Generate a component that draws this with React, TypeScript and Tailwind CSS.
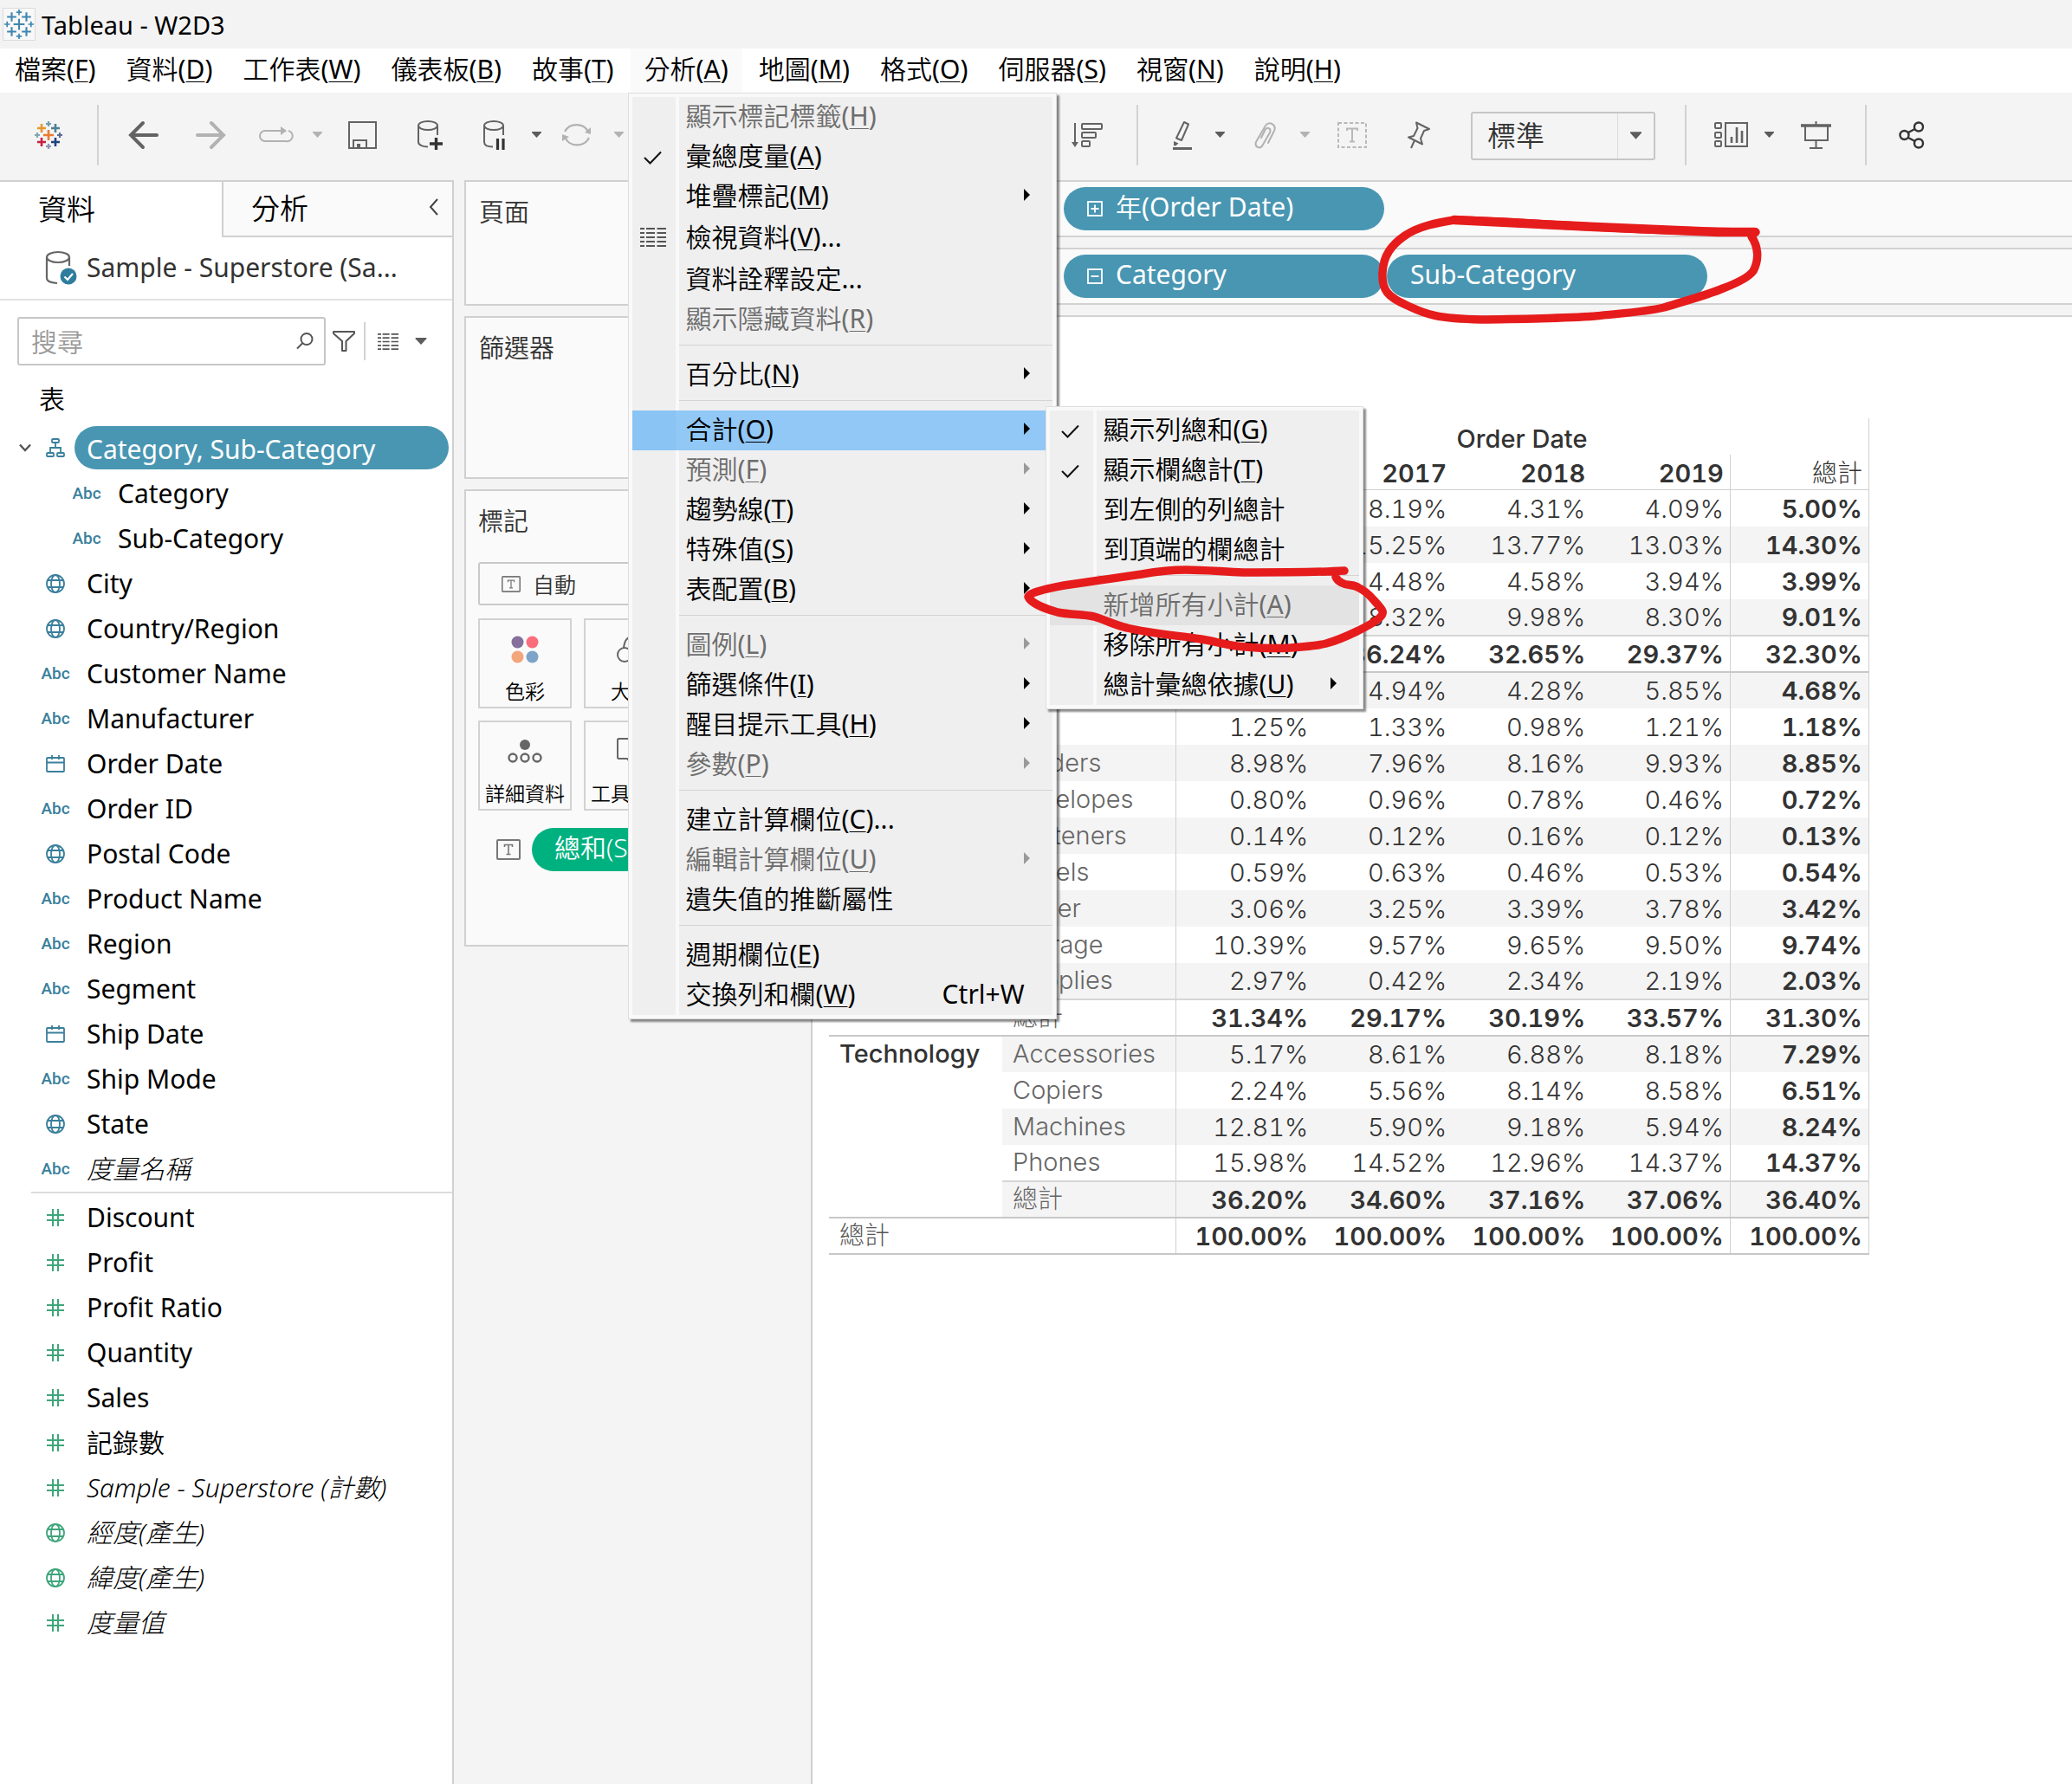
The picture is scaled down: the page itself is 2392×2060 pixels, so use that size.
import React from "react";

const TEAL = "#3a7f9c";
const GREEN = "#3fa57b";

/* ---------- Shared pieces ---------- */

function Plus({ x, y, r, w, c }: { x: number; y: number; r: number; w: number; c: string }) {
  return <path d={`M${x - r} ${y}H${x + r}M${x} ${y - r}V${y + r}`} stroke={c} strokeWidth={w} fill="none" />;
}

function TableauMark({ size, mono }: { size: number; mono?: boolean }) {
  const c = (s: string) => (mono ? "#3f86b0" : s);
  const w = mono ? 2 : 2.6;
  return (
    <svg width={size} height={size} viewBox="0 0 32 32" aria-hidden="true">
      <Plus x={16} y={16} r={6} w={w} c={c("#eb7b30")} />
      <Plus x={8} y={8} r={5} w={w} c={c("#e8962e")} />
      <Plus x={24} y={8} r={5} w={w} c={c("#4e7f93")} />
      <Plus x={8} y={24} r={5} w={w} c={c("#c8203f")} />
      <Plus x={24} y={24} r={5} w={w} c={c("#1f447e")} />
      <Plus x={16} y={3} r={3} w={w - 0.4} c={c("#6f9fb0")} />
      <Plus x={16} y={29} r={3} w={w - 0.4} c={c("#8a93b8")} />
      <Plus x={3} y={16} r={3} w={w - 0.4} c={c("#7fa7b5")} />
      <Plus x={29} y={16} r={3} w={w - 0.4} c={c("#5a6b9b")} />
    </svg>
  );
}

function Caret({ color = "#5c5c5c", w = 11, h = 7 }: { color?: string; w?: number; h?: number }) {
  return (
    <svg width={w} height={h} viewBox="0 0 11 7" aria-hidden="true" className="shrink-0">
      <path d="M0 0H11V1L5.5 7L0 1Z" fill={color} />
    </svg>
  );
}

function GridIcon({ w, h }: { w: number; h: number }) {
  return (
    <svg width={w} height={h} viewBox="0 0 30 22" preserveAspectRatio="none" aria-hidden="true">
      {[1, 6, 11, 16, 21].map((y) => (
        <path key={y} d={`M0 ${y}H5M7 ${y}H17M19.5 ${y}H30`} stroke="#555" strokeWidth="2" />
      ))}
    </svg>
  );
}

function TextBoxIcon({ w, h }: { w: number; h: number }) {
  return (
    <svg width={w} height={h} viewBox="0 0 28 24" aria-hidden="true" className="shrink-0">
      <rect x="1" y="1" width="26" height="22" rx="1" fill="none" stroke="#777" strokeWidth="2" />
      <path d="M9.5 9V6.5H18.500V9M14 6.500V17.500M11.500 17.500H16.500" fill="none" stroke="#777" strokeWidth="1.600" />
    </svg>
  );
}

/* ---------- Menus ---------- */

function Accel({ t, k, tail }: { t: string; k?: string; tail?: string }) {
  return (
    <span className="whitespace-nowrap">
      <span className="font-[350]">{t}</span>
      {k && (
        <>
          (<span className="underline decoration-1 underline-offset-[3px]">{k}</span>)
        </>
      )}
      {tail}
    </span>
  );
}

type Item = {
  t: string;
  k?: string;
  tail?: string;
  off?: boolean;
  sub?: boolean;
  check?: boolean;
  grid?: boolean;
  keys?: string;
  open?: boolean;
  hover?: boolean;
};

const analysisMenu: (Item | null)[] = [
  { t: "顯示標記標籤", k: "H", off: true },
  { t: "彙總度量", k: "A", check: true },
  { t: "堆疊標記", k: "M", sub: true },
  { t: "檢視資料", k: "V", tail: "...", grid: true },
  { t: "資料詮釋設定", tail: "..." },
  { t: "顯示隱藏資料", k: "R", off: true },
  null,
  { t: "百分比", k: "N", sub: true },
  null,
  { t: "合計", k: "O", sub: true, open: true },
  { t: "預測", k: "F", sub: true, off: true },
  { t: "趨勢線", k: "T", sub: true },
  { t: "特殊值", k: "S", sub: true },
  { t: "表配置", k: "B", sub: true },
  null,
  { t: "圖例", k: "L", sub: true, off: true },
  { t: "篩選條件", k: "I", sub: true },
  { t: "醒目提示工具", k: "H", sub: true },
  { t: "參數", k: "P", sub: true, off: true },
  null,
  { t: "建立計算欄位", k: "C", tail: "..." },
  { t: "編輯計算欄位", k: "U", sub: true, off: true },
  { t: "遺失值的推斷屬性" },
  null,
  { t: "週期欄位", k: "E" },
  { t: "交換列和欄", k: "W", keys: "Ctrl+W" },
];

const totalsMenu: (Item | null)[] = [
  { t: "顯示列總和", k: "G", check: true },
  { t: "顯示欄總計", k: "T", check: true },
  { t: "到左側的列總計" },
  { t: "到頂端的欄總計" },
  null,
  { t: "新增所有小計", k: "A", off: true, hover: true },
  { t: "移除所有小計", k: "M" },
  { t: "總計彙總依據", k: "U", sub: true },
];

function MenuPanel({ items, className }: { items: (Item | null)[]; className: string }) {
  return (
    <div
      role="menu"
      className={
        "absolute z-20 border border-[#dedede] bg-[#f9f9f9] p-1 shadow-[3px_3px_2px_rgba(0,0,0,0.45)] " + className
      }
    >
      <div className="bg-[linear-gradient(to_right,#efefef_50px,#f9f9f9_50px,#f9f9f9_54px,#efefef_54px)]">
        {items.map((it, i) =>
          it === null ? (
            <div key={i} role="separator" className="ml-[54px] flex h-[18px] flex-col pt-1.5">
              <div className="h-px bg-[#d4d4d4]" />
            </div>
          ) : (
            <div
              key={i}
              className={
                "relative " +
                (it.open
                  ? "bg-[linear-gradient(to_right,#8ac4f4_50px,#91c8f6_50px)]"
                  : it.hover
                    ? "bg-[#e3e3e3]"
                    : "")
              }
            >
              <button
                type="button"
                role="menuitem"
                disabled={it.off}
                className={
                  "flex w-full items-center pb-0.5 text-left " +
                  (it.grid ? "h-[50px] " : "h-[46px] ") +
                  (it.off ? "text-[#6d6d6d]" : "text-black")
                }
              >
                <span className="flex w-[62px] shrink-0 items-center pl-[9px]">
                  {it.check && (
                    <svg width="30" height="22" viewBox="0 0 30 22" aria-hidden="true" className="mt-1">
                      <path d="M5 11L11.500 17.500L24 4.500" fill="none" stroke="#111" strokeWidth="2" />
                    </svg>
                  )}
                  {it.grid && <GridIcon w={30} h={22} />}
                </span>
                <Accel t={it.t} k={it.k} tail={it.tail} />
                {it.keys && <span className="mr-[32px] ml-auto">{it.keys}</span>}
                {it.sub && (
                  <svg width="7" height="14" viewBox="0 0 7 14" aria-hidden="true" className="mr-[26px] mb-0.5 ml-auto">
                    <path d="M0 0L7 7L0 14Z" fill={it.off ? "#9a9a9a" : "#000"} />
                  </svg>
                )}
              </button>
              {it.open && <MenuPanel items={totalsMenu} className="top-[-5px] left-[477px] w-[367px]" />}
            </div>
          ),
        )}
      </div>
    </div>
  );
}

const menuBar: [string, string][] = [
  ["檔案", "F"],
  ["資料", "D"],
  ["工作表", "W"],
  ["儀表板", "B"],
  ["故事", "T"],
  ["分析", "A"],
  ["地圖", "M"],
  ["格式", "O"],
  ["伺服器", "S"],
  ["視窗", "N"],
  ["說明", "H"],
];

/* ---------- Toolbar ---------- */

function Tool({ label, className, children }: { label: string; className: string; children: React.ReactNode }) {
  return (
    <button type="button" aria-label={label} className={"flex shrink-0 items-center justify-center " + className}>
      {children}
    </button>
  );
}

function Sep({ className }: { className: string }) {
  return <div className={"h-[70px] w-0.5 shrink-0 bg-[#d2d2d2] " + className} />;
}

function Toolbar() {
  const g = "#636363";
  const l = "#b2b2b2";
  return (
    <div role="toolbar" className="flex h-[101px] items-center bg-[#f4f4f4] pb-1 pl-10">
      <Tool label="Tableau" className="w-8">
        <TableauMark size={32} />
      </Tool>
      <Sep className="ml-10" />
      <Tool label="復原" className="ml-[34px] w-9">
        <svg width="36" height="34" viewBox="0 0 36 34" fill="none" stroke={g} strokeWidth="4" strokeLinecap="round">
          <path d="M17 3L3 17L17 31M3 17H33" />
        </svg>
      </Tool>
      <Tool label="重做" className="ml-[41px] w-9">
        <svg width="36" height="34" viewBox="0 0 36 34" fill="none" stroke={l} strokeWidth="4" strokeLinecap="round">
          <path d="M19 3L33 17L19 31M33 17H3" />
        </svg>
      </Tool>
      <Tool label="重播" className="ml-[36px] w-[42px]">
        <svg width="42" height="22" viewBox="0 0 42 22" fill="none" stroke={l} strokeWidth="2">
          <path d="M28 6H9A6 6 0 0 0 9 18H33A6 6 0 0 0 36 6" />
          <path d="M27 1L34 6L27 11Z" fill={l} stroke="none" />
        </svg>
      </Tool>
      <Tool label="重播選項" className="ml-[22px] w-[11px]">
        <Caret color={l} />
      </Tool>
      <Tool label="儲存" className="ml-[30px] w-[33px]">
        <svg width="33" height="32" viewBox="0 0 33 32" fill="none" stroke={g} strokeWidth="2">
          <rect x="1" y="1" width="31" height="30" />
          <path d="M6 31V22H21V31" />
          <path d="M12 26V31" strokeWidth="4" />
        </svg>
      </Tool>
      <Tool label="新增資料來源" className="ml-[47px] w-[30px]">
        <svg width="30" height="34" viewBox="0 0 30 34" fill="none" stroke={g} strokeWidth="2">
          <ellipse cx="12" cy="6" rx="11" ry="5" />
          <path d="M1 6V25C1 28 5 30.500 12 30.500M23 6V17" />
          <path d="M14 27H29M21.500 20V34" stroke="#333" strokeWidth="3.400" />
        </svg>
      </Tool>
      <Tool label="暫停自動更新" className="ml-[46px] w-[26px]">
        <svg width="26" height="34" viewBox="0 0 26 34" fill="none" stroke={g} strokeWidth="2">
          <ellipse cx="12" cy="6" rx="11" ry="5" />
          <path d="M1 6V25C1 28 4 30.500 11 30.500M23 6V17" />
          <path d="M16.500 21V34M23 21V34" stroke="#333" strokeWidth="3.200" />
        </svg>
      </Tool>
      <Tool label="暫停選項" className="ml-[30px] w-[11px]">
        <Caret />
      </Tool>
      <Tool label="重新整理" className="ml-[23px] w-9">
        <svg width="36" height="32" viewBox="0 0 36 32" fill="none" stroke={l} strokeWidth="2.200">
          <path d="M4 12A15 14 0 0 1 31 12M32 19A15 14 0 0 1 5 20" />
          <path d="M27 13L34 15L34 7ZM9 18L1 23V15Z" fill={l} stroke="none" />
        </svg>
      </Tool>
      <Tool label="重新整理選項" className="ml-[25px] w-[11px]">
        <Caret color={l} />
      </Tool>
      <Tool label="遞減排序" className="ml-[517px] w-9">
        <svg width="36" height="32" viewBox="0 0 36 32" fill="none" stroke={g} strokeWidth="2">
          <path d="M4 2V27" />
          <path d="M0 24H8L4 30Z" fill={g} stroke="none" />
          <rect x="12" y="3" width="23" height="6" rx="1" />
          <rect x="12" y="13" width="16" height="6" rx="1" />
          <rect x="12" y="23" width="9" height="6" rx="1" />
        </svg>
      </Tool>
      <Sep className="ml-[39px]" />
      <Tool label="醒目提示" className="ml-[40px] w-6">
        <svg width="24" height="34" viewBox="0 0 24 34" fill="none" stroke={g} strokeWidth="2" strokeLinejoin="round">
          <path d="M13 2L18 4.500L10 23L4 20.500Z" />
          <path d="M1 24L6.500 26.500L3 29.500L1 29Z" fill={g} stroke="none" />
          <path d="M0 32.500H22" strokeWidth="3" />
        </svg>
      </Tool>
      <Tool label="醒目提示選項" className="ml-[25px] w-[11px]">
        <Caret />
      </Tool>
      <Tool label="群組" className="ml-[34px] w-[26px]">
        <svg width="26" height="32" viewBox="0 0 26 32" fill="none" stroke={l} strokeWidth="2" strokeLinecap="round">
          <path d="M16 25L23 11C26 4 17 -1 13 5L2 24C0 30 7 33 10 27L18 13C20 8 15 6 12.500 10L8 19" />
        </svg>
      </Tool>
      <Tool label="群組選項" className="ml-[27px] w-[11px]">
        <Caret color={l} />
      </Tool>
      <Tool label="顯示標記標籤" className="ml-[32px] w-[34px]">
        <svg width="34" height="30" viewBox="0 0 34 30" fill="none" stroke="#b8b8b8" strokeWidth="2">
          <rect x="1" y="1" width="32" height="28" strokeDasharray="4 2.500" />
          <path d="M11 10V7.500H23V10M17 7.500V22.500M14 22.500H20" />
        </svg>
      </Tool>
      <Tool label="固定座標軸" className="ml-[46px] w-7">
        <svg width="28" height="32" viewBox="0 0 28 32" fill="none" stroke={g} strokeWidth="2" strokeLinejoin="round">
          <path d="M11 1.500L26 9L20 11L16 20L18 26.500L2 18.500L8 17L12.500 8ZM9 22L5 31" />
        </svg>
      </Tool>
      <div className="relative mt-0.5 ml-[46px] h-14 w-[213px] shrink-0">
        <select
          aria-label="符合"
          defaultValue="標準"
          className="h-14 w-full appearance-none rounded-[3px] border-2 border-[#c6c6c6] bg-[#f4f4f4] pl-[17px] text-[33px] font-[350] text-[#333]"
        >
          <option>標準</option>
        </select>
        <div className="pointer-events-none absolute inset-y-0.5 right-0.5 flex w-[42px] items-center justify-center border-l border-[#dcdcdc]">
          <Caret w={13} h={9} />
        </div>
      </div>
      <Sep className="ml-[34px]" />
      <Tool label="顯示卡片" className="ml-[32px] w-10">
        <svg width="40" height="30" viewBox="0 0 40 30" fill="none" stroke={g} strokeWidth="2">
          <rect x="1" y="1" width="7" height="6" rx="1" />
          <rect x="1" y="12" width="7" height="6" rx="1" />
          <rect x="1" y="22" width="7" height="6" rx="1" />
          <rect x="13" y="1" width="25" height="27" />
          <path d="M20 24V17M26 24V6M32 24V10" strokeWidth="2.600" />
        </svg>
      </Tool>
      <Tool label="卡片選項" className="ml-[18px] w-[11px]">
        <Caret />
      </Tool>
      <Tool label="簡報模式" className="ml-[31px] w-[35px]">
        <svg width="35" height="32" viewBox="0 0 35 32" fill="none" stroke={g} strokeWidth="2">
          <path d="M0 5H35" strokeWidth="3.600" />
          <path d="M17.500 0V4M5 6V22H31V6M17.500 22V30" />
          <path d="M10 31H25" />
        </svg>
      </Tool>
      <Sep className="ml-[39px]" />
      <Tool label="共用" className="ml-[37px] w-[30px]">
        <svg width="30" height="32" viewBox="0 0 30 32" fill="none" stroke="#333" strokeWidth="2.400">
          <circle cx="6.500" cy="16" r="5" />
          <circle cx="23" cy="6.500" r="5" />
          <circle cx="23" cy="25.500" r="5" />
          <path d="M11 13L18.500 9M11 19L18.500 23" />
        </svg>
      </Tool>
    </div>
  );
}

/* ---------- Data pane ---------- */

function Globe({ c }: { c: string }) {
  return (
    <svg width="22" height="22" viewBox="0 0 22 22" fill="none" stroke={c} strokeWidth="1.800" aria-hidden="true">
      <circle cx="11" cy="11" r="10" />
      <ellipse cx="11" cy="11" rx="5" ry="10" />
      <path d="M2 7H20M2 15H20" />
    </svg>
  );
}

function FieldIcon({ kind, green }: { kind: string; green?: boolean }) {
  const c = green ? GREEN : TEAL;
  if (kind === "abc") return <span className="font-[Roboto] text-[19px] font-medium text-[#3a7f9c]">Abc</span>;
  if (kind === "globe") return <Globe c={c} />;
  if (kind === "date")
    return (
      <svg width="22" height="22" viewBox="0 0 22 22" fill="none" stroke={c} strokeWidth="1.800" aria-hidden="true">
        <rect x="1" y="4" width="20" height="16" rx="1" />
        <path d="M1 9.500H21M7 1V6M15 1V6" />
      </svg>
    );
  if (kind === "tree")
    return (
      <svg width="22" height="22" viewBox="0 0 22 22" fill="none" stroke={c} strokeWidth="1.800" aria-hidden="true">
        <rect x="7" y="1" width="8" height="4" rx="1" />
        <rect x="1" y="17" width="8" height="4" rx="1" />
        <rect x="13" y="17" width="8" height="4" rx="1" />
        <path d="M11 5V11M5 17V11H17V17" />
      </svg>
    );
  return (
    <svg width="20" height="20" viewBox="0 0 20 20" fill="none" stroke={c} strokeWidth="2" aria-hidden="true">
      <path d="M0 7H20M0 13H20M7 0V20M13 0V20" />
    </svg>
  );
}

const dimensions: [string, string, string?][] = [
  ["abc", "Category", "nest"],
  ["abc", "Sub-Category", "nest"],
  ["globe", "City"],
  ["globe", "Country/Region"],
  ["abc", "Customer Name"],
  ["abc", "Manufacturer"],
  ["date", "Order Date"],
  ["abc", "Order ID"],
  ["globe", "Postal Code"],
  ["abc", "Product Name"],
  ["abc", "Region"],
  ["abc", "Segment"],
  ["date", "Ship Date"],
  ["abc", "Ship Mode"],
  ["globe", "State"],
  ["abc", "度量名稱", "italic"],
];

const measures: [string, string, string?][] = [
  ["num", "Discount"],
  ["num", "Profit"],
  ["num", "Profit Ratio"],
  ["num", "Quantity"],
  ["num", "Sales"],
  ["num", "記錄數", "thin"],
  ["num", "Sample - Superstore (計數)", "italic"],
  ["globe", "經度(產生)", "italic"],
  ["globe", "緯度(產生)", "italic"],
  ["num", "度量值", "italic"],
];

function FieldRow({ f, green }: { f: [string, string, string?]; green?: boolean }) {
  const nest = f[2] === "nest";
  return (
    <li className={"flex h-[52px] items-center " + (nest ? "pl-[78px]" : "pl-[42px]")}>
      <span className="flex w-11 justify-center">
        <FieldIcon kind={f[0]} green={green} />
      </span>
      <span
        className={
          "ml-3.5 whitespace-nowrap text-black " +
          (f[2] === "italic" ? "font-light italic" : f[2] === "thin" ? "font-[350]" : "")
        }
      >
        {f[1]}
      </span>
    </li>
  );
}

function DataPane() {
  return (
    <aside className="flex w-[524px] shrink-0 flex-col border-r-2 border-[#d0d0d0] bg-white">
      <div role="tablist" className="flex h-[66px] border-t-2 border-[#d0d0d0] text-[33px] font-[350] text-black">
        <button type="button" role="tab" aria-selected="true" className="w-64 pl-11 text-left">
          資料
        </button>
        <div className="flex flex-1 items-center justify-between border-b-2 border-l-2 border-[#d0d0d0] bg-[#fafafa] pr-4 pl-8">
          <button type="button" role="tab" aria-selected="false">
            分析
          </button>
          <button type="button" aria-label="收合" className="pb-1">
            <svg width="11" height="20" viewBox="0 0 11 20" fill="none" stroke="#444" strokeWidth="2">
              <path d="M10 1L2 10L10 19" />
            </svg>
          </button>
        </div>
      </div>
      <div className="flex h-[73px] items-center border-b-2 border-[#e2e2e2] pb-0.5 pl-[52px]">
        <svg width="37" height="40" viewBox="0 0 37 40" fill="none" stroke="#666" strokeWidth="2.200" aria-hidden="true">
          <ellipse cx="15" cy="8" rx="13" ry="6" />
          <path d="M2 8V32C2 35 6 37.500 14 38M28 8V18" />
          <circle cx="27" cy="30" r="9.500" fill="#2f7d9c" stroke="none" />
          <path d="M22.500 30.500L26 34L32 27" stroke="#fff" />
        </svg>
        <span className="ml-[11px] text-[#333]">Sample - Superstore (Sa...</span>
      </div>
      <div className="flex h-[94px] items-center pl-5">
        <div className="flex h-14 w-[356px] items-center rounded-[3px] border-2 border-[#c6c6c6] pr-3">
          <input
            type="text"
            aria-label="搜尋"
            placeholder="搜尋"
            className="h-full min-w-0 flex-1 bg-transparent pl-3.5 font-[350] outline-none placeholder:text-[#9a9a9a]"
          />
          <svg width="20" height="20" viewBox="0 0 20 20" fill="none" stroke="#555" strokeWidth="2" aria-hidden="true">
            <circle cx="12" cy="7.500" r="6.500" />
            <path d="M7.500 12L1 18.500" />
          </svg>
        </div>
        <button type="button" aria-label="篩選" className="ml-2">
          <svg width="26" height="26" viewBox="0 0 26 26" fill="none" stroke="#555" strokeWidth="2" strokeLinejoin="round">
            <path d="M1 2H25V4L15.500 13V24H11V13L1 4Z" />
          </svg>
        </button>
        <div className="ml-[10px] h-11 w-0.5 bg-[#d2d2d2]" />
        <button type="button" aria-label="檢視資料" className="ml-3.5">
          <GridIcon w={24} h={19} />
        </button>
        <button type="button" aria-label="檢視選項" className="ml-[19px]">
          <Caret w={14} h={8} />
        </button>
      </div>
      <h2 className="flex h-[51px] items-center pb-3 pl-[45px] font-[350] text-black">表</h2>
      <ul>
        <li className="flex h-[52px] items-start">
          <span className="flex h-[50px] w-[86px] items-center pl-[22px]">
            <svg width="14" height="10" viewBox="0 0 14 10" fill="none" stroke="#555" strokeWidth="2.400" aria-hidden="true">
              <path d="M1 1.500L7 8L13 1.500" />
            </svg>
            <span className="ml-[17px]">
              <FieldIcon kind="tree" />
            </span>
          </span>
          <span className="mr-1 flex h-[50px] flex-1 items-center rounded-full bg-[#4996b2] pt-1 pl-3.5 text-white">
            Category, Sub-Category
          </span>
        </li>
        {dimensions.map((f) => (
          <FieldRow key={f[1]} f={f} />
        ))}
      </ul>
      <div className="mb-0.5 ml-9 h-0.5 bg-[#dcdcdc]" />
      <ul>
        {measures.map((f) => (
          <FieldRow key={f[1]} f={f} green />
        ))}
      </ul>
    </aside>
  );
}

/* ---------- Cards ---------- */

function MarkButton({ label, children }: { label: string; children: React.ReactNode }) {
  return (
    <button
      type="button"
      className="flex h-[104px] w-[108px] flex-col items-center justify-between border-2 border-[#d2d2d2] pt-[18px] text-[23px] whitespace-nowrap text-black"
    >
      {children}
      <span className="leading-9">{label}</span>
    </button>
  );
}

function Cards() {
  return (
    <div className="flex w-[412px] shrink-0 flex-col gap-3 pr-3 pl-3 text-[29px] font-[350] text-[#333]">
      <section className="h-[145px] border-2 border-[#d0d0d0] bg-[#fafafa] pt-[15px] pl-[15px]">
        <h3 className="leading-10">頁面</h3>
      </section>
      <section className="h-[188px] border-2 border-[#d0d0d0] bg-[#fafafa] pt-[15px] pl-[15px]">
        <h3 className="leading-10">篩選器</h3>
      </section>
      <section className="h-[528px] border-2 border-[#d0d0d0] bg-[#fafafa] px-[14px] pt-[15px]">
        <h3 className="leading-10">標記</h3>
        <button
          type="button"
          className="mt-[27px] flex h-[50px] w-full items-center rounded-[3px] border-2 border-[#c9c9c9] pl-[25px] text-[25px]"
        >
          <TextBoxIcon w={22} h={19} />
          <span className="ml-[14px] pt-0.5">自動</span>
        </button>
        <div className="mt-[15px] grid grid-cols-[108px_108px_108px] gap-[14px]">
          <MarkButton label="色彩">
            <svg width="32" height="32" viewBox="0 0 32 32" aria-hidden="true">
              <circle cx="7.500" cy="7.500" r="7" fill="#84709b" />
              <circle cx="24.500" cy="7.500" r="7" fill="#fa6e7c" />
              <circle cx="7.500" cy="24.500" r="7" fill="#f3a57b" />
              <circle cx="24.500" cy="24.500" r="7" fill="#7ea3c8" />
            </svg>
          </MarkButton>
          <MarkButton label="大小">
            <svg width="32" height="32" viewBox="0 0 32 32" fill="none" stroke="#666" strokeWidth="2" aria-hidden="true">
              <path d="M8 14C9 6 12 2 16 2C21 2 24 7 24 14" />
              <circle cx="9" cy="22" r="8" />
              <circle cx="23" cy="22" r="8" />
            </svg>
          </MarkButton>
          <MarkButton label="文字">
            <TextBoxIcon w={28} h={24} />
          </MarkButton>
          <MarkButton label="詳細資料">
            <svg width="40" height="34" viewBox="0 0 40 34" fill="none" stroke="#666" strokeWidth="2.400" aria-hidden="true">
              <circle cx="20" cy="8" r="6" fill="#666" stroke="none" />
              <circle cx="6" cy="23" r="4.500" />
              <circle cx="20" cy="23" r="4.500" />
              <circle cx="34" cy="23" r="4.500" />
            </svg>
          </MarkButton>
          <MarkButton label="工具提示">
            <svg width="32" height="32" viewBox="0 0 32 32" fill="none" stroke="#666" strokeWidth="2" aria-hidden="true">
              <path d="M2 1H30L31 2V23L30 24H20L16 29L12 24H2L1 23V2Z" />
            </svg>
          </MarkButton>
        </div>
        <div className="mt-5 flex items-center pl-[21px]">
          <TextBoxIcon w={28} h={24} />
          <span className="ml-[13px] flex h-[50px] flex-1 items-center rounded-full bg-[#00b180] pb-1 pl-[26px] text-[30px] whitespace-nowrap text-white">
            總和(Sales)
          </span>
        </div>
      </section>
    </div>
  );
}

/* ---------- Shelves and view ---------- */

function Pill({ sign, children }: { sign?: string; children: React.ReactNode }) {
  return (
    <span className="flex h-[50px] w-[370px] items-center rounded-full bg-[#4996b2] pb-1 pl-[27px] text-white">
      {sign && (
        <svg
          width="18"
          height="18"
          viewBox="0 0 18 18"
          fill="none"
          stroke="#fff"
          strokeWidth="1.800"
          className="mt-1 mr-[15px]"
          aria-hidden="true"
        >
          <rect x="1" y="1" width="16" height="16" />
          <path d={sign === "+" ? "M4.500 9H13.500M9 4.500V13.500" : "M4.500 9H13.500"} />
        </svg>
      )}
      <span>{children}</span>
    </span>
  );
}

type Row = { cat?: string; span?: number; sub: string; v: string[]; total?: boolean };

const rows: Row[] = [
  { cat: "Furniture", span: 5, sub: "Bookcases", v: ["", "8.19%", "4.31%", "4.09%", "5.00%"] },
  { sub: "Chairs", v: ["", "15.25%", "13.77%", "13.03%", "14.30%"] },
  { sub: "Furnishings", v: ["", "4.48%", "4.58%", "3.94%", "3.99%"] },
  { sub: "Tables", v: ["", "8.32%", "9.98%", "8.30%", "9.01%"] },
  { sub: "總計", v: ["", "36.24%", "32.65%", "29.37%", "32.30%"], total: true },
  { cat: "Office Supplies", span: 10, sub: "Appliances", v: ["", "4.94%", "4.28%", "5.85%", "4.68%"] },
  { sub: "Art", v: ["1.25%", "1.33%", "0.98%", "1.21%", "1.18%"] },
  { sub: "Binders", v: ["8.98%", "7.96%", "8.16%", "9.93%", "8.85%"] },
  { sub: "Envelopes", v: ["0.80%", "0.96%", "0.78%", "0.46%", "0.72%"] },
  { sub: "Fasteners", v: ["0.14%", "0.12%", "0.16%", "0.12%", "0.13%"] },
  { sub: "Labels", v: ["0.59%", "0.63%", "0.46%", "0.53%", "0.54%"] },
  { sub: "Paper", v: ["3.06%", "3.25%", "3.39%", "3.78%", "3.42%"] },
  { sub: "Storage", v: ["10.39%", "9.57%", "9.65%", "9.50%", "9.74%"] },
  { sub: "Supplies", v: ["2.97%", "0.42%", "2.34%", "2.19%", "2.03%"] },
  { sub: "總計", v: ["31.34%", "29.17%", "30.19%", "33.57%", "31.30%"], total: true },
  { cat: "Technology", span: 5, sub: "Accessories", v: ["5.17%", "8.61%", "6.88%", "8.18%", "7.29%"] },
  { sub: "Copiers", v: ["2.24%", "5.56%", "8.14%", "8.58%", "6.51%"] },
  { sub: "Machines", v: ["12.81%", "5.90%", "9.18%", "5.94%", "8.24%"] },
  { sub: "Phones", v: ["15.98%", "14.52%", "12.96%", "14.37%", "14.37%"] },
  { sub: "總計", v: ["36.20%", "34.60%", "37.16%", "37.06%", "36.40%"], total: true },
];

function Values({ v, bold, ruled }: { v: string[]; bold?: boolean; ruled?: boolean }) {
  return (
    <>
      {v.map((x, j) => (
        <td
          key={j}
          className={
            "pt-0.5 pr-[7px] text-right text-[#333] " +
            (j === 0 ? "border-l border-l-[#d0d0d0] " : "") +
            (j === 4 ? "border-x border-x-[#d0d0d0] " : "") +
            (ruled ? "border-t-2 border-b-2 border-t-[#d6d6d6] border-b-[#c8c8c8] " : "") +
            (bold || j === 4 ? "font-semibold" : "")
          }
        >
          {x}
        </td>
      ))}
    </>
  );
}

function CrossTab() {
  return (
    <table className="w-[1201px] table-fixed border-collapse font-[Inter,'Noto_Sans_CJK_TC',sans-serif] text-[29px] leading-9 font-light tabular-nums">
      <colgroup>
        <col className="w-[200px]" />
        <col className="w-[200px]" />
        <col className="w-40" />
        <col className="w-40" />
        <col className="w-40" />
        <col className="w-40" />
        <col className="w-40" />
      </colgroup>
      <thead className="text-[#333]">
        <tr className="h-[42px]">
          <th colSpan={2} />
          <th colSpan={5} className="border-r border-[#d0d0d0] pt-1.5 font-medium">
            Order Date
          </th>
        </tr>
        <tr className="h-10">
          <th colSpan={2} className="border-b border-[#d0d0d0]" />
          {["2016", "2017", "2018", "2019"].map((y) => (
            <th key={y} className="border-b border-[#d0d0d0] pt-1 pr-[7px] text-right font-semibold">
              {y}
            </th>
          ))}
          <th className="border-x border-b border-[#d0d0d0] pt-1 pr-[7px] text-right font-light">總計</th>
        </tr>
      </thead>
      <tbody>
        {rows.map((r, i) => (
          <tr key={i} className={"h-[42px] " + (i % 2 ? "bg-[#f4f4f4]" : "")}>
            {r.cat && (
              <th
                rowSpan={r.span}
                scope="rowgroup"
                className="border-b-2 border-[#c8c8c8] bg-white px-3 pt-0.5 text-left align-top font-medium text-[#333]"
              >
                {r.cat}
              </th>
            )}
            <th
              scope="row"
              className={
                "pl-3 text-left font-light text-[#666] " +
                (r.total ? "border-t-2 border-b-2 border-t-[#d6d6d6] border-b-[#c8c8c8]" : "")
              }
            >
              {r.sub}
            </th>
            <Values v={r.v} bold={r.total} ruled={r.total} />
          </tr>
        ))}
        <tr className="h-[42px] border-b-2 border-[#c8c8c8]">
          <th colSpan={2} scope="row" className="pl-3 text-left font-light text-[#555]">
            總計
          </th>
          <Values v={["100.00%", "100.00%", "100.00%", "100.00%", "100.00%"]} bold />
        </tr>
      </tbody>
    </table>
  );
}

function Shelf({ name, children }: { name: string; children: React.ReactNode }) {
  return (
    <div className="flex h-[66px] items-center border-y-2 border-[#d2d2d2] bg-[#fafafa]">
      <span className="w-[290px] shrink-0 pl-9 text-[#333]">{name}</span>
      <div className="flex gap-[3px]">{children}</div>
    </div>
  );
}

function View() {
  return (
    <main className="flex min-w-0 flex-1 flex-col border-l-2 border-[#d0d0d0]">
      <div className="flex flex-col gap-3">
        <Shelf name="欄">
          <Pill sign="+">
            <span className="font-[350]">年</span>(Order Date)
          </Pill>
        </Shelf>
        <Shelf name="列">
          <Pill sign="-">Category</Pill>
          <Pill>Sub-Category</Pill>
        </Shelf>
      </div>
      <div className="mt-3 flex-1 border-t-2 border-[#d2d2d2] bg-white pt-[117px] pl-[19px]">
        <CrossTab />
      </div>
    </main>
  );
}

/* Red pen strokes drawn over the window */
function PenMarks() {
  return (
    <svg
      width="900"
      height="540"
      viewBox="1170 230 900 540"
      className="pointer-events-none absolute top-[230px] left-[1170px] z-30"
      fill="none"
      stroke="#e61c1c"
      strokeWidth="9.500"
      strokeLinecap="round"
      strokeLinejoin="round"
      aria-hidden="true"
    >
      <path d="M2027 268C1960 268 1900 265 1841 262C1790 260 1740 255 1679 254C1660 257 1638 261 1622 272C1606 283 1597 295 1596 315C1595 335 1602 343 1625 353C1645 362 1655 368 1710 369C1760 368 1800 368 1841 365C1880 361 1900 360 1921 355C1950 346 1970 341 1989 333C2005 327 2018 321 2024 313C2031 300 2030 285 2022 273" />
      <path d="M1552 659C1520 661 1480 661 1435 661C1410 660 1390 658 1369 658C1350 658 1335 660 1318 663L1249 673C1225 676 1188 683 1187 689C1190 697 1210 704 1221 707C1236 710 1250 709 1263 712C1277 716 1287 722 1301 725C1325 731 1360 734 1387 738C1405 741 1420 746 1438 747C1460 749 1475 749 1490 748C1510 746 1520 746 1531 743C1550 738 1585 721 1593 713C1599 707 1597 705 1586 693C1580 686 1576 682 1569 679C1562 674 1556 677 1549 673C1545 671 1543 669 1542 666" />
      <path d="M1679 254L1841 262L1983 268L2026 268" strokeWidth="10.500" />
    </svg>
  );
}

export default function App() {
  return (
    <div className="relative flex min-h-screen flex-col bg-[#f4f4f4] font-['Noto_Sans','Noto_Sans_CJK_TC',sans-serif] text-[30px] leading-10 text-black">
      <header className="flex h-14 items-center bg-[#f3f3f3] pl-[3px]">
        <span className="flex h-[38px] w-[38px] items-center justify-center border border-[#dcdcdc] bg-[#f8f8f8]">
          <TableauMark size={34} mono />
        </span>
        <h1 className="mt-0.5 ml-[7px] text-[29px]">Tableau - W2D3</h1>
      </header>
      <nav className="flex h-[51px] gap-[3px] bg-white pl-px">
        {menuBar.map(([t, k]) => (
          <div key={t} className="relative">
            <button type="button" className={"h-full px-4 pb-1 " + (t === "分析" ? "bg-[#fafafa]" : "")}>
              <Accel t={t} k={k} />
            </button>
            {t === "分析" && <MenuPanel items={analysisMenu} className="top-full left-[-3px] w-[495px]" />}
          </div>
        ))}
      </nav>
      <Toolbar />
      <div className="flex flex-1">
        <DataPane />
        <Cards />
        <View />
      </div>
      <PenMarks />
    </div>
  );
}
